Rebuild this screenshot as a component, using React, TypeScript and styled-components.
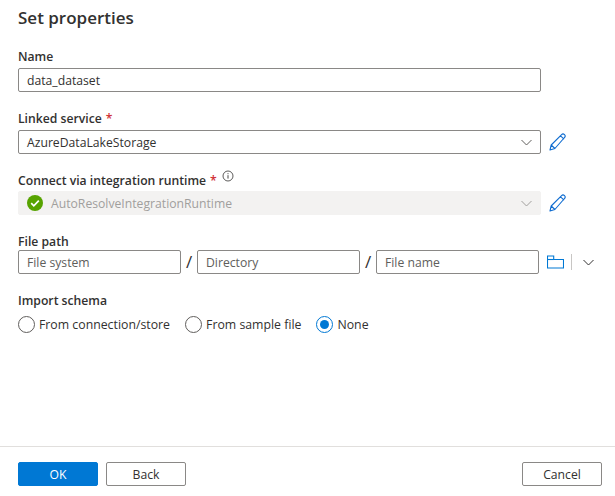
import React from "react";
import styled, { createGlobalStyle } from "styled-components";

const Global = createGlobalStyle`
  html, body { margin: 0; padding: 0; background: #fff; }
  body { font-family: "Open Sans", "Noto Sans", "Liberation Sans", sans-serif; color: #323130; }
`;

const Page = styled.div`
  width: 615px;
  height: 496px;
  display: flex;
  flex-direction: column;
  overflow: hidden;
`;
const Body = styled.div`
  flex: 1;
  padding: 6px 18px 0;
`;
const Title = styled.h1`
  margin: 0;
  height: 23px;
  line-height: 23px;
  font-size: 17px;
  font-weight: 600;
  color: #323130;
`;
const Label = styled.div<{ $top: number }>`
  margin-top: ${(p) => p.$top}px;
  height: 16px;
  line-height: 16px;
  font-size: 12.2px;
  font-weight: 600;
  color: #323130;
  display: flex;
  align-items: flex-start;
`;
const Star = styled.span`
  color: #d13438;
  margin-left: 4px;
`;
const InfoIcon = styled.svg`
  margin-left: 5px;
  margin-top: -3px;
`;
const Row = styled.div<{ $mt?: number }>`
  display: flex;
  align-items: center;
  margin-top: ${(p) => p.$mt ?? 3}px;
`;
const Field = styled.div<{ $width: number; $muted?: boolean; $disabled?: boolean }>`
  box-sizing: border-box;
  width: ${(p) => p.$width}px;
  height: 24px;
  border: 1px solid ${(p) => (p.$disabled ? "#f3f2f1" : "#8a8886")};
  border-radius: 2px;
  background: ${(p) => (p.$disabled ? "#f3f2f1" : "#fff")};
  display: flex;
  align-items: center;
  padding: 0 8px;
  font-size: 12.2px;
  color: ${(p) => (p.$disabled ? "#a19f9d" : p.$muted ? "#605e5c" : "#323130")};
  white-space: nowrap;
`;
const FieldText = styled.span`
  flex: 1;
`;
const StatusIcon = styled.svg`
  margin: 0 8px 0 0;
  flex: none;
`;
const EditIcon = styled.svg`
  margin-left: 8px;
  flex: none;
`;
const Slash = styled.span`
  width: 16px;
  text-align: center;
  font-size: 17px;
  line-height: 24px;
  color: #323130;
`;
const FolderIcon = styled.svg`
  margin-left: 8px;
  flex: none;
`;
const Separator = styled.span`
  width: 1px;
  height: 16px;
  background: #c8c6c4;
  margin: 0 11px 0 7px;
`;
const RadioRow = styled.div`
  display: flex;
  align-items: center;
  margin-top: 7px;
  gap: 15px;
`;
const RadioItem = styled.div`
  display: flex;
  align-items: center;
  gap: 4px;
  font-size: 12.3px;
  color: #323130;
`;
const RadioDot = styled.span<{ $on?: boolean }>`
  box-sizing: border-box;
  width: 17px;
  height: 17px;
  border-radius: 50%;
  border: 1px solid ${(p) => (p.$on ? "#0078d4" : "#605e5c")};
  display: flex;
  align-items: center;
  justify-content: center;
  &::after {
    content: "";
    display: ${(p) => (p.$on ? "block" : "none")};
    width: 9px;
    height: 9px;
    border-radius: 50%;
    background: #0078d4;
  }
`;
const Footer = styled.div`
  box-sizing: border-box;
  height: 50px;
  border-top: 1px solid #e1dfdd;
  padding: 15px 13px 0 18px;
  display: flex;
  gap: 8px;
`;
const Button = styled.button<{ $primary?: boolean; $push?: boolean }>`
  box-sizing: border-box;
  width: 80px;
  height: 24px;
  padding: 0;
  border-radius: 2px;
  border: 1px solid ${(p) => (p.$primary ? "#0078d4" : "#8a8886")};
  background: ${(p) => (p.$primary ? "#0078d4" : "#fff")};
  color: ${(p) => (p.$primary ? "#fff" : "#323130")};
  font-family: inherit;
  font-size: 12.2px;
  margin-left: ${(p) => (p.$push ? "auto" : "0")};
`;

const Chevron = ({ color = "#605e5c" }: { color?: string }) => (
  <svg width="11" height="7" viewBox="0 0 11 7" fill="none">
    <path d="M.5 1l5 5 5-5" stroke={color} strokeWidth="1" />
  </svg>
);

const Pencil = () => (
  <EditIcon width="18" height="18" viewBox="0 0 18 18" fill="none">
    <path
      d="M1 17l1.2-5L12.6 1.6c.8-.8 2-.8 2.9 0 .8.8.8 2.1 0 2.9L5.9 15.5 1 17zM2.2 12l3.7 3.5M11.5 2.8l3.6 3.3"
      stroke="#0f6cd0"
      strokeWidth="1.1"
      strokeLinejoin="round"
    />
  </EditIcon>
);

export default function App() {
  return (
    <Page>
      <Global />
      <Body>
        <Title>Set properties</Title>
        <Label $top={20}>Name</Label>
        <Row>
          <Field $width={523}>data_dataset</Field>
        </Row>
        <Label $top={19}>
          Linked service<Star>*</Star>
        </Label>
        <Row>
          <Field $width={523}>
            <FieldText>AzureDataLakeStorage</FieldText>
            <Chevron />
          </Field>
          <Pencil />
        </Row>
        <Label $top={19}>
          Connect via integration runtime<Star>*</Star>
          <InfoIcon width="12" height="12" viewBox="0 0 12 12" fill="none">
            <circle cx="6" cy="6" r="5" stroke="#323130" strokeWidth="0.8" />
            <path d="M6 5.2v3.4M6 3.2v1" stroke="#323130" strokeWidth="0.9" />
          </InfoIcon>
        </Label>
        <Row $mt={2}>
          <Field $width={523} $disabled>
            <StatusIcon width="16" height="16" viewBox="0 0 16 16">
              <circle cx="8" cy="8" r="8" fill="#57a300" />
              <path d="M4.2 8.2l2.6 2.6 5-5.2" stroke="#fff" strokeWidth="1.7" fill="none" />
            </StatusIcon>
            <FieldText>AutoResolveIntegrationRuntime</FieldText>
            <Chevron color="#a19f9d" />
          </Field>
          <Pencil />
        </Row>
        <Label $top={19}>File path</Label>
        <Row $mt={0}>
          <Field $width={163} $muted>File system</Field>
          <Slash>/</Slash>
          <Field $width={163} $muted>Directory</Field>
          <Slash>/</Slash>
          <Field $width={163} $muted>File name</Field>
          <FolderIcon width="17" height="14" viewBox="0 0 17 14" fill="none">
            <path d="M.5 13V1h6.2v3.5H16.5V13z" stroke="#0078d4" strokeWidth="1.1" />
            <path d="M.5 4.5h6.2" stroke="#0078d4" strokeWidth="1.1" />
          </FolderIcon>
          <Separator />
          <Chevron color="#323130" />
        </Row>
        <Label $top={19}>Import schema</Label>
        <RadioRow>
          <RadioItem><RadioDot />From connection/store</RadioItem>
          <RadioItem><RadioDot />From sample file</RadioItem>
          <RadioItem><RadioDot $on />None</RadioItem>
        </RadioRow>
      </Body>
      <Footer>
        <Button $primary>OK</Button>
        <Button>Back</Button>
        <Button $push>Cancel</Button>
      </Footer>
    </Page>
  );
}
